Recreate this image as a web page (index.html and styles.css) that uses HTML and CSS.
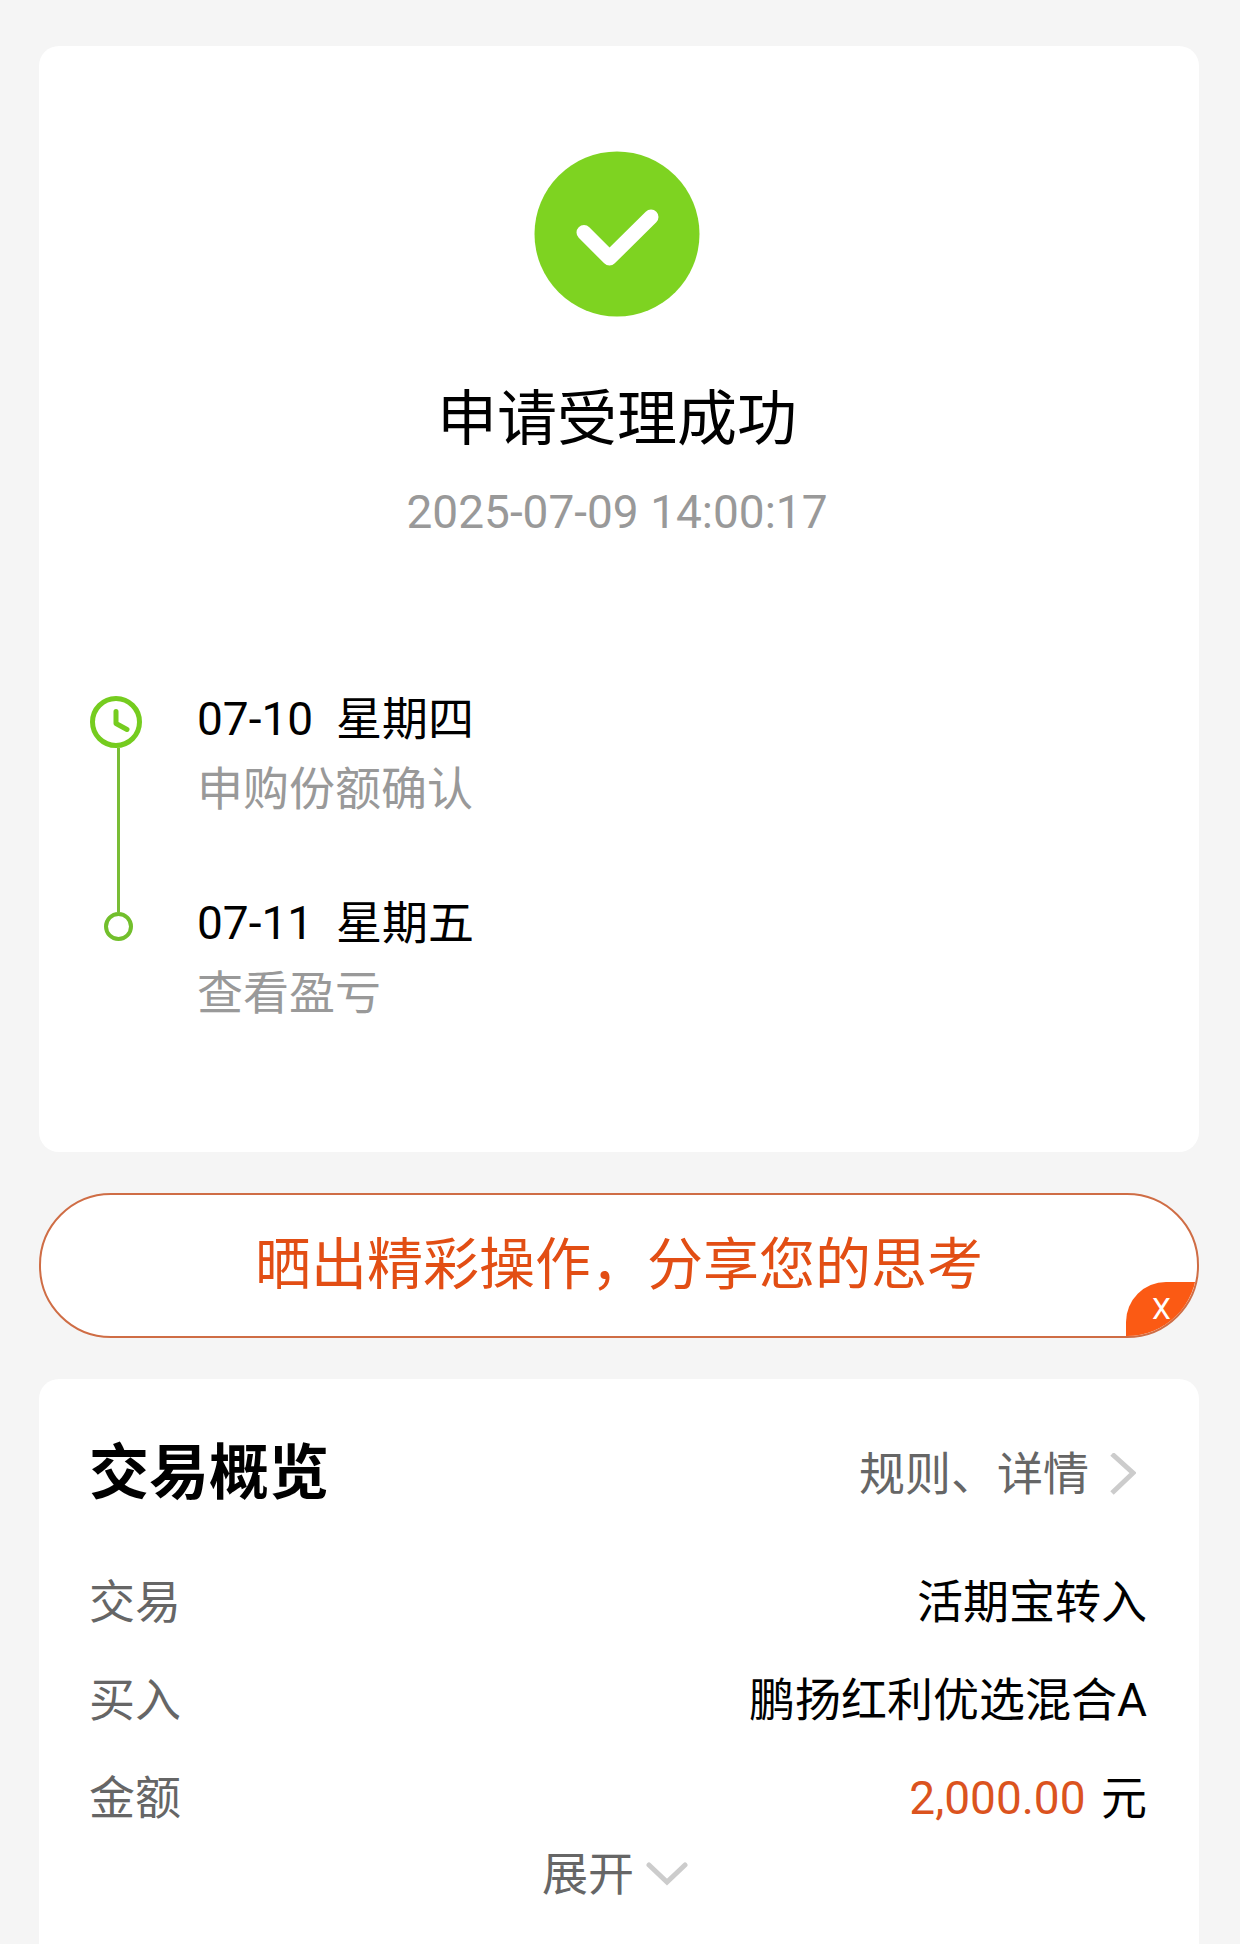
FILE: index.html
```
<!DOCTYPE html>
<html lang="zh-CN">
<head>
    <meta charset="UTF-8">
    <meta name="viewport" content="width=device-width, initial-scale=1.0">
    <title>申请受理成功</title>
    <link rel="stylesheet" href="styles.css">
</head>
<body>

<section class="card result">
    <svg class="result-icon" viewBox="0 0 166 166" aria-hidden="true">
        <circle cx="83" cy="83" r="82.5" fill="#7ed321"/>
        <path d="M50 81.5 L75.5 107 L117 66" fill="none" stroke="#fff" stroke-width="15" stroke-linecap="round" stroke-linejoin="round"/>
    </svg>
    <h1>申请受理成功</h1>
    <time class="result-time">2025-07-09 14:00:17</time>

    <ol class="timeline">
        <li>
            <div class="marker marker-first">
                <svg class="clock" viewBox="0 0 57 52" aria-hidden="true">
                    <circle cx="26" cy="26" r="23.5" fill="none" stroke="#75cc1f" stroke-width="5"/>
                    <path d="M26 15.5 V27.5 L37 33.5" fill="none" stroke="#75cc1f" stroke-width="5" stroke-linecap="round" stroke-linejoin="round"/>
                </svg>
                <span class="line"></span>
            </div>
            <div class="step">
                <p class="step-date">07-10&nbsp; 星期四</p>
                <p class="step-text">申购份额确认</p>
            </div>
        </li>
        <li>
            <div class="marker marker-last">
                <span class="line"></span>
                <span class="ring"></span>
            </div>
            <div class="step">
                <p class="step-date">07-11&nbsp; 星期五</p>
                <p class="step-text">查看盈亏</p>
            </div>
        </li>
    </ol>
</section>

<div class="share">
    <a href="#" class="share-link">晒出精彩操作，分享您的思考</a>
    <button type="button" class="share-close" aria-label="关闭">X</button>
</div>

<section class="card overview">
    <div class="overview-head">
        <h2>交易概览</h2>
        <a href="#" class="rules">规则、详情
            <svg class="arrow-right" viewBox="0 0 26 42" aria-hidden="true">
                <path d="M2 1 L23 20 L2 40" fill="none" stroke="#ccc" stroke-width="5"/>
            </svg>
        </a>
    </div>
    <dl class="rows">
        <div class="row">
            <dt>交易</dt>
            <dd>活期宝转入</dd>
        </div>
        <div class="row">
            <dt>买入</dt>
            <dd>鹏扬红利优选混合A</dd>
        </div>
        <div class="row">
            <dt>金额</dt>
            <dd><span class="amount">2,000.00</span> 元</dd>
        </div>
    </dl>
    <button type="button" class="expand">展开
        <svg class="arrow-down" viewBox="0 0 48 26" aria-hidden="true">
            <path d="M3 4 L21 21 L39 4" fill="none" stroke="#ccc" stroke-width="5" stroke-linecap="round"/>
        </svg>
    </button>
</section>

</body>
</html>
```
FILE: styles.css
```
* {
    box-sizing: border-box;
    margin: 0;
    padding: 0;
}
body {
    font-family: Roboto, "Noto Sans CJK SC", sans-serif;
    font-size: 46px;
    line-height: 60px;
    color: #000;
    background-color: #f5f5f5;
    min-height: 100vh;
    padding: 46px 41px 0 39px;
    display: flex;
    flex-direction: column;
    gap: 41px;
}
a {
    color: inherit;
    text-decoration: none;
}
button {
    font: inherit;
    border: none;
    background: none;
    cursor: pointer;
}
.card {
    background-color: #fff;
    border-radius: 20px;
}

.result {
    display: flex;
    flex-direction: column;
    align-items: center;
    padding: 105px 55px 129px 51px;
}
.result-icon {
    width: 166px;
    height: 166px;
}
h1 {
    margin-top: 63px;
    font-size: 60px;
    font-weight: 400;
    line-height: 80px;
}
.result-time {
    margin-top: 22px;
    color: #999;
}

.timeline {
    width: 100%;
    margin-top: 147px;
    list-style: none;
}
.timeline li {
    display: flex;
    gap: 50px;
}
.timeline li:first-child .step {
    padding-bottom: 74px;
}
.marker {
    display: flex;
    flex-direction: column;
    align-items: center;
    width: 57px;
}
.marker-first {
    padding-top: 7px;
}
.marker-first .line {
    flex: 1;
}
.marker-last .line {
    height: 19px;
}
.clock {
    width: 57px;
    height: 52px;
}
.line {
    width: 3px;
    background-color: #79bd35;
}
.ring {
    width: 29px;
    height: 29px;
    border: 4px solid #72bf2c;
    border-radius: 50%;
}
.step-text {
    margin-top: 10px;
    color: #999;
}

.share {
    position: relative;
    overflow: hidden;
    border: 2px solid #cf6d45;
    border-radius: 72px;
    background-color: #fff;
}
.share-link {
    display: block;
    font-size: 56px;
    line-height: 141px;
    text-align: center;
    color: #e24e14;
}
.share-close {
    position: absolute;
    right: 0;
    bottom: 0;
    width: 71px;
    height: 54px;
    border-radius: 40px 0 0 0;
    font-size: 30px;
    line-height: 54px;
    color: #fff;
    background-color: #fb5a14;
}

.overview {
    flex: 1;
    display: flex;
    flex-direction: column;
    border-radius: 20px 20px 0 0;
    padding: 55px 52px 38px 50px;
}
.overview-head {
    display: flex;
    justify-content: space-between;
    align-items: center;
}
h2 {
    font-size: 60px;
    font-weight: 700;
    line-height: 80px;
}
.rules {
    display: flex;
    align-items: center;
    gap: 21px;
    padding-right: 11px;
    color: #666;
}
.arrow-right {
    width: 26px;
    height: 42px;
}
.rows {
    display: flex;
    flex-direction: column;
    gap: 38px;
    margin-top: 58px;
}
.row {
    display: flex;
    justify-content: space-between;
}
.row dt {
    color: #666;
}
.amount {
    margin-right: 4px;
    color: #db531e;
}
.expand {
    display: flex;
    align-items: center;
    align-self: center;
    gap: 12px;
    margin-top: 16px;
    color: #666;
}
.arrow-down {
    width: 48px;
    height: 26px;
}
```
